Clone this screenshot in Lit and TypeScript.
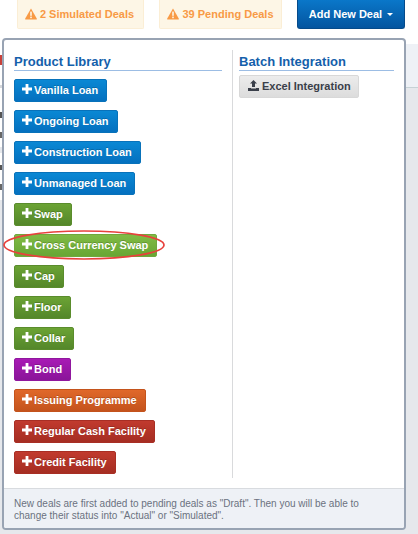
import { LitElement, html, css, svg } from "lit";
import { customElement } from "lit/decorators.js";

type Item = { label: string; kind: string; hot?: boolean };
const ITEMS: Item[] = [
  { label: "Vanilla Loan", kind: "blue" },
  { label: "Ongoing Loan", kind: "blue" },
  { label: "Construction Loan", kind: "blue" },
  { label: "Unmanaged Loan", kind: "blue" },
  { label: "Swap", kind: "green" },
  { label: "Cross Currency Swap", kind: "lime", hot: true },
  { label: "Cap", kind: "green" },
  { label: "Floor", kind: "green" },
  { label: "Collar", kind: "green" },
  { label: "Bond", kind: "purple" },
  { label: "Issuing Programme", kind: "orange" },
  { label: "Regular Cash Facility", kind: "red" },
  { label: "Credit Facility", kind: "red" },
];

const warn = svg`<path d="M6 .4 L11.9 10.8 Q12 11.4 11.5 11.4 L.5 11.4 Q0 11.4 .1 10.8 Z" fill="#f89a45"/><rect x="5.2" y="3.6" width="1.6" height="4.2" fill="#fdf6e6"/><rect x="5.2" y="8.6" width="1.6" height="1.6" fill="#fdf6e6"/>`;

@customElement("app-root")
export class AppRoot extends LitElement {
  static styles = css`
    :host {
      display: block;
      width: 418px;
      height: 534px;
      overflow: hidden;
      background: #fff;
      font-family: "Liberation Sans", Arial, sans-serif;
      font-size: 11px;
      position: relative;
    }
    .top {
      position: relative;
      z-index: 1;
      display: flex;
      align-items: flex-start;
      height: 29px;
      padding: 0 0 0 17px;
      margin-bottom: 9px;
    }
    .alert {
      box-sizing: border-box;
      height: 29px;
      display: flex;
      align-items: center;
      justify-content: center;
      gap: 3px;
      background: #fdf6e6;
      border: 1px solid #fbeed5;
      border-top: 0;
      border-radius: 0 0 2px 2px;
      color: #f89a45;
      font-size: 11px;
      font-weight: 700;
      white-space: nowrap;
      margin-right: 15px;
    }
    .alert svg { width: 12px; height: 12px; flex: none; margin-top: -1px; }
    .a1 { width: 127px; padding-right: 2px; }
    .a2 { width: 123px; }
    .add {
      box-sizing: border-box;
      width: 108px;
      height: 29px;
      display: flex;
      align-items: center;
      justify-content: center;
      gap: 5px;
      color: #fff;
      font-weight: 700;
      font-size: 11px;
      background: linear-gradient(#0a77c9, #04559f);
      border: 1px solid #054a8a;
      border-top: 0;
      border-radius: 0 0 3px 3px;
    }
    .caret {
      width: 0; height: 0;
      border-left: 3px solid transparent;
      border-right: 3px solid transparent;
      border-top: 3px solid #fff;
    }
    .bg {
      position: absolute;
      inset: 0;
      z-index: 0;
      pointer-events: none;
    }
    .band {
      position: absolute;
      left: 0; right: 0;
      top: 44px;
      height: 43px;
      background: #eef1f6;
      border-bottom: 1px solid #c6d2d6;
    }
    .under {
      position: absolute;
      left: 0; right: 0; top: 88px; bottom: 0;
      background: #e6e8ec;
    }
    .strip {
      position: absolute;
      left: 0;
      top: 40px;
      width: 2px;
      height: 160px;
      background: linear-gradient(
        #fff 0 15px,
        #c8413a 15px 25px,
        #fff 25px 45px,
        #d6d8dc 45px 48px,
        #fff 48px 72px,
        #555 72px 78px,
        #fff 78px 92px,
        #666 92px 98px,
        #fff 98px 107px,
        #e6e8ec 107px 113px,
        #fff 113px 125px,
        #555 125px 130px,
        #fff 130px 144px,
        #666 144px 150px,
        #fff 150px 160px
      );
    }
    .menu {
      position: relative;
      z-index: 1;
      box-sizing: border-box;
      width: 404px;
      height: 492px;
      margin-left: 2px;
      background: #fff;
      border: 2px solid #98a3b3;
      border-radius: 4px;
      display: flex;
      flex-direction: column;
    }
    .cols {
      flex: 1;
      display: flex;
      padding: 10px 0 10px 10px;
      min-height: 0;
    }
    .left {
      width: 208px;
      padding: 2px 10px 0 0;
      border-right: 1px solid #d9dadc;
    }
    .right { width: 155px; margin-left: 6px; padding-top: 2px; }
    h3 {
      margin: 0 0 8px;
      font-size: 13px;
      line-height: 19px;
      font-weight: 700;
      color: #1460ab;
      border-bottom: 1px solid #9cbde4;
      height: 18px;
    }
    .right h3 { margin-bottom: 4px; }
    .list { display: flex; flex-direction: column; align-items: flex-start; gap: 8px; }
    .btn {
      box-sizing: border-box;
      height: 23px;
      display: inline-flex;
      align-items: center;
      gap: 2px;
      padding: 0 8px 2px 7px;
      color: #fff;
      font-weight: 700;
      font-size: 11px;
      border-radius: 2px;
      white-space: nowrap;
      text-shadow: 0 -1px 0 rgba(0,0,0,.2);
    }
    .btn svg { width: 10px; height: 10px; flex: none; margin-top: -1px; }
    .blue { background: linear-gradient(#0a88d4, #0470bf); border: 1px solid #0872ba; }
    .green { background: linear-gradient(#6ba334, #54872a); border: 1px solid #5a8c2c; }
    .lime { background: linear-gradient(#80bb44, #68a634); border: 1px solid #70a83c; }
    .purple { background: linear-gradient(#a81ab5, #8a1599); border: 1px solid #90179e; }
    .orange { background: linear-gradient(#e0682a, #c4531c); border: 1px solid #c4531c; }
    .red { background: linear-gradient(#c13a2e, #a52d22); border: 1px solid #a82e24; }
    .btn.grey {
      width: 120px;
      background: linear-gradient(#ececec, #dcdcdc);
      border: 1px solid #d8d8d8;
      color: #3a3f4a;
      text-shadow: none;
      gap: 3px;
      padding: 0 8px 2px;
    }
    .btn.grey svg { width: 11px; height: 11px; }
    .hot { position: relative; }
    .btn svg.ring {
      position: absolute;
      left: -12px;
      top: -5px;
      width: 162px;
      height: 30px;
      margin: 0;
      overflow: visible;
      pointer-events: none;
    }
    .foot {
      box-sizing: border-box;
      height: 40px;
      padding: 9px 10px 0;
      background: #eef1f6;
      border-top: 1px solid #d8dbdf;
      border-radius: 0 0 2px 2px;
      color: #6b7280;
      font-size: 10px;
      line-height: 12px;
    }
  `;

  private plus() {
    return html`<svg viewBox="0 0 10 10"><path d="M3.6 0h2.8v3.6H10v2.8H6.4V10H3.6V6.4H0V3.6h3.6z" fill="#fff"/></svg>`;
  }

  render() {
    return html`
      <div class="bg"><div class="band"></div><div class="under"></div><div class="strip"></div></div>
      <div class="top">
        <div class="alert a1"><svg viewBox="0 0 12 12">${warn}</svg>2 Simulated Deals</div>
        <div class="alert a2"><svg viewBox="0 0 12 12">${warn}</svg>39 Pending Deals</div>
        <div class="add">Add New Deal <span class="caret"></span></div>
      </div>
      <div class="menu">
        <div class="cols">
          <div class="left">
            <h3>Product Library</h3>
            <div class="list">
              ${ITEMS.map(
                (i) => html`<div class="btn ${i.kind} ${i.hot ? "hot" : ""}">
                  ${this.plus()}${i.label}
                  ${i.hot
                    ? html`<svg class="ring" viewBox="0 0 162 30"><ellipse cx="81" cy="15" rx="80" ry="14" fill="none" stroke="#e8413c" stroke-width="1.7"/></svg>`
                    : ""}
                </div>`
              )}
            </div>
          </div>
          <div class="right">
            <h3>Batch Integration</h3>
            <div class="btn grey">
              <svg viewBox="0 0 11 11"><path d="M5.5 0 L9 3.6 H7 V7 H4 V3.6 H2 Z M0 8 H3 V8.6 H8 V8 H11 V11 H0 Z" fill="#3a3f4a"/></svg>Excel Integration
            </div>
          </div>
        </div>
        <div class="foot">New deals are first added to pending deals as "Draft". Then you will be able to change their status into "Actual" or "Simulated".</div>
      </div>
    `;
  }
}
